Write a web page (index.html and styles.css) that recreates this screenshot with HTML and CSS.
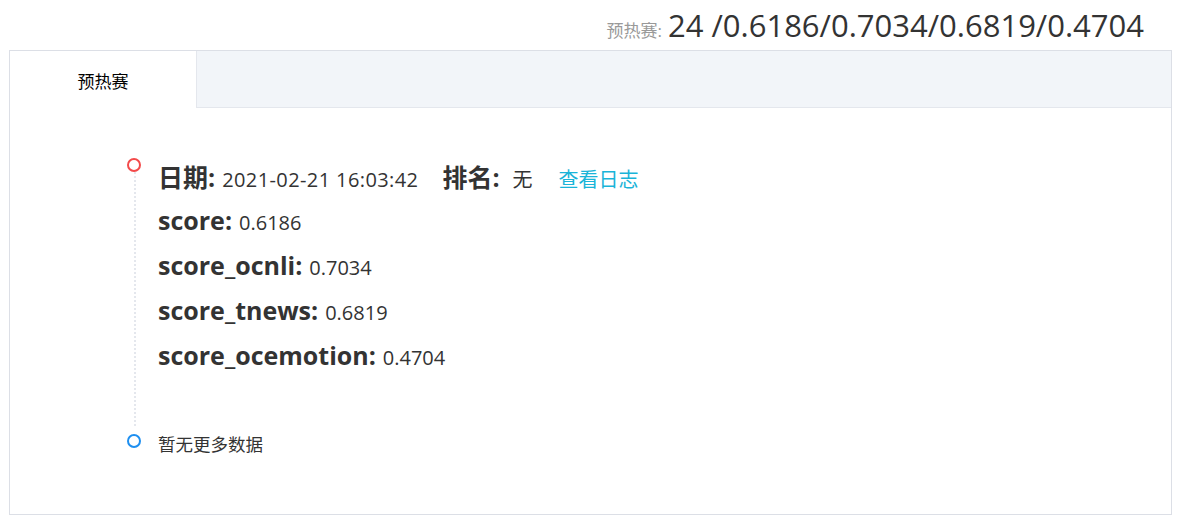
FILE: index.html
```html
<!DOCTYPE html>
<html>
<head>
<meta charset="utf-8">
<link rel="stylesheet" href="styles.css">
</head>
<body>
<div class="page">
  <div class="summary">
    <span class="sum-label">预热赛:</span>
    <span class="sum-value">24 /0.6186/0.7034/0.6819/0.4704</span>
  </div>
  <div class="card">
    <div class="tabs">
      <div class="tab active">预热赛</div>
    </div>
    <div class="card-body">
      <ul class="timeline">
        <li class="tl-item">
          <span class="tl-tail"></span>
          <span class="tl-dot red"></span>
          <div class="tl-content">
            <div class="row"><b>日期:</b><span class="v date">2021-02-21 16:03:42</span><b class="gap">排名:</b><span class="v wide">无</span><a class="log">查看日志</a></div>
            <div class="row"><b>score:</b><span class="v">0.6186</span></div>
            <div class="row"><b>score_ocnli:</b><span class="v">0.7034</span></div>
            <div class="row"><b>score_tnews:</b><span class="v">0.6819</span></div>
            <div class="row"><b>score_ocemotion:</b><span class="v">0.4704</span></div>
          </div>
        </li>
        <li class="tl-item last">
          <span class="tl-dot blue"></span>
          <div class="tl-content small">暂无更多数据</div>
        </li>
      </ul>
    </div>
  </div>
</div>
</body>
</html>
```
FILE: styles.css
```css
* { box-sizing: border-box; }
html, body { margin: 0; padding: 0; background: #fff; }
body {
  font-family: "Open Sans", "Noto Sans CJK SC", sans-serif;
  color: #333;
}
.page { padding: 0 6px 0 9px; }
.summary {
  height: 50px;
  display: flex;
  align-items: baseline;
  justify-content: flex-end;
  padding-right: 28px;
  padding-top: 7px;
}
.sum-label { font-size: 17px; color: #999; margin-right: 6px; }
.sum-value { font-size: 31px; color: #333; line-height: 36px; }
.card {
  border: 1px solid #dcdfe6;
  height: 465px;
  display: flex;
  flex-direction: column;
}
.tabs {
  height: 57px;
  background: #f2f5f9;
  border-bottom: 1px solid #e4e7ed;
  display: flex;
}
.tab {
  width: 187px;
  height: 57px;
  background: #fff;
  border-right: 1px solid #e4e7ed;
  display: flex;
  align-items: center;
  justify-content: center;
  font-size: 17px;
  color: #000;
  padding-top: 2px;
}
.card-body { flex: 1; padding: 44px 0 0 117px; }
.timeline { list-style: none; margin: 0; padding: 0; }
.tl-item { position: relative; padding-left: 31px; }
.tl-item:first-child { padding-bottom: 55px; }
.tl-tail {
  position: absolute;
  left: 7px;
  top: 20px;
  bottom: 6px;
  border-left: 2px dotted #e4e7ed;
}
.tl-dot {
  position: absolute;
  left: 0;
  top: 6px;
  width: 14px;
  height: 14px;
  border-radius: 50%;
  border: 2px solid #f34a4a;
  background: #fff;
}
.tl-dot.blue { border-color: #1e8ff0; top: 2px; }
.row {
  height: 45px;
  display: flex;
  align-items: baseline;
  white-space: nowrap;
  padding-top: 6px;
}
.row b { font-size: 25px; font-weight: 700; color: #333; }
.row .v { font-size: 20px; margin-left: 7px; }
.row .v.date { letter-spacing: 0.4px; }
.row .v.wide { margin-left: 13px; }
.gap { margin-left: 24px; }
.log { color: #1ab4d8; margin-left: 26px; font-size: 20px; }
.tl-content.small { font-size: 17.5px; color: #333; line-height: 22px; padding-top: 1px; }
```
